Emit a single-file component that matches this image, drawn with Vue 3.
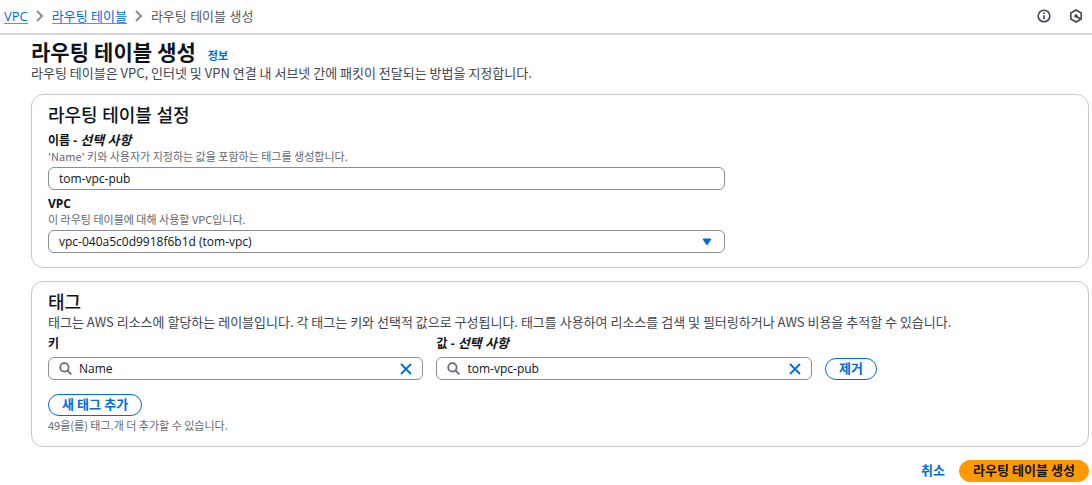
<script setup>
import { ref } from 'vue'

const name = ref('tom-vpc-pub')
const vpc = ref('vpc-040a5c0d9918f6b1d')
const tags = ref([{ key: 'Name', value: 'tom-vpc-pub' }])

const maxTags = 50

function addTag() {
  tags.value.push({ key: '', value: '' })
}

function removeTag(index) {
  tags.value.splice(index, 1)
}
</script>

<template>
  <div class="page">
    <header class="topbar">
      <nav class="breadcrumbs">
        <a href="#">VPC</a>
        <svg class="chevron" viewBox="0 0 8 12"><path d="M1 1l5 5-5 5" /></svg>
        <a href="#">라우팅 테이블</a>
        <svg class="chevron" viewBox="0 0 8 12"><path d="M1 1l5 5-5 5" /></svg>
        <span>라우팅 테이블 생성</span>
      </nav>
      <div class="tools">
        <button class="icon-btn" aria-label="정보">
          <svg viewBox="0 0 14 14">
            <circle cx="7" cy="7" r="5.8" />
            <path d="M7 6.2v4M7 3.6v1.4" />
          </svg>
        </button>
        <button class="icon-btn" aria-label="설정">
          <svg viewBox="0 0 14 14">
            <path d="M7 1l5.2 3v6L7 13l-5.2-3V4z" />
            <path d="M7.5 7.5l4 2.5" />
            <circle class="dot" cx="7" cy="7" r="1.8" />
          </svg>
        </button>
      </div>
    </header>

    <main class="content">
      <div class="title-row">
        <h1>라우팅 테이블 생성</h1>
        <a href="#" class="info">정보</a>
      </div>
      <p class="description">
        라우팅 테이블은 VPC, 인터넷 및 VPN 연결 내 서브넷 간에 패킷이 전달되는 방법을 지정합니다.
      </p>

      <section class="card settings">
        <h2>라우팅 테이블 설정</h2>
        <div class="fields">
          <div class="field">
            <label for="name">이름 - <em>선택 사항</em></label>
            <p class="hint">'Name' 키와 사용자가 지정하는 값을 포함하는 태그를 생성합니다.</p>
            <input id="name" v-model="name" class="control" type="text" />
          </div>
          <div class="field">
            <label for="vpc">VPC</label>
            <p class="hint">이 라우팅 테이블에 대해 사용할 VPC입니다.</p>
            <div class="select-wrap">
              <select id="vpc" v-model="vpc" class="control">
                <option value="vpc-040a5c0d9918f6b1d">vpc-040a5c0d9918f6b1d (tom-vpc)</option>
              </select>
              <svg class="caret" viewBox="0 0 10 8"><path d="M1 1h8L5 7z" /></svg>
            </div>
          </div>
        </div>
      </section>

      <section class="card">
        <h2>태그</h2>
        <p class="description">
          태그는 AWS 리소스에 할당하는 레이블입니다. 각 태그는 키와 선택적 값으로 구성됩니다. 태그를 사용하여 리소스를 검색 및 필터링하거나 AWS 비용을 추적할 수 있습니다.
        </p>
        <div v-for="(tag, i) in tags" :key="i" class="tag-row">
          <div class="tag-field">
            <label :for="`key-${i}`">키</label>
            <div class="search control">
              <svg class="magnifier" viewBox="0 0 14 14">
                <circle cx="5.8" cy="5.8" r="4.5" />
                <path d="M9 9l4.2 4.2" />
              </svg>
              <input :id="`key-${i}`" v-model="tag.key" type="text" />
              <button class="clear" aria-label="지우기" @click="tag.key = ''">
                <svg viewBox="0 0 12 12"><path d="M1 1l10 10M11 1L1 11" /></svg>
              </button>
            </div>
          </div>
          <div class="tag-field">
            <label :for="`value-${i}`">값 - <em>선택 사항</em></label>
            <div class="search control">
              <svg class="magnifier" viewBox="0 0 14 14">
                <circle cx="5.8" cy="5.8" r="4.5" />
                <path d="M9 9l4.2 4.2" />
              </svg>
              <input :id="`value-${i}`" v-model="tag.value" type="text" />
              <button class="clear" aria-label="지우기" @click="tag.value = ''">
                <svg viewBox="0 0 12 12"><path d="M1 1l10 10M11 1L1 11" /></svg>
              </button>
            </div>
          </div>
          <div class="tag-action">
            <button class="btn" @click="removeTag(i)">제거</button>
          </div>
        </div>
        <button class="btn add" @click="addTag">새 태그 추가</button>
        <p class="hint">{{ maxTags - tags.length }}을(를) 태그.개 더 추가할 수 있습니다.</p>
      </section>

      <footer class="actions">
        <button class="btn link">취소</button>
        <button class="btn primary">라우팅 테이블 생성</button>
      </footer>
    </main>
  </div>
</template>

<style>
body {
  background: #fff;
}
</style>

<style scoped>
.page {
  font-family: 'Open Sans', 'Noto Sans CJK KR', sans-serif;
  font-size: 13px;
  line-height: 16px;
  color: #0f141a;
}

h1,
h2,
p {
  margin: 0;
}

h1,
h2,
.info,
.btn {
  font-family: Lato, 'Noto Sans CJK KR', sans-serif;
}

button,
input,
select {
  font: inherit;
  color: inherit;
}

button {
  cursor: pointer;
}

svg {
  display: block;
  fill: none;
  flex: none;
}

.topbar {
  display: flex;
  align-items: center;
  justify-content: space-between;
  padding: 8px 9px 9px 4px;
  border-bottom: 2px solid #d5d5da;
}

.breadcrumbs {
  display: flex;
  align-items: center;
  gap: 8px;
  color: #565a63;
}

.breadcrumbs a {
  height: 15px;
  color: #006ce0;
  text-decoration: none;
  border-bottom: 1px solid #4a97ea;
}

.chevron {
  width: 8px;
  height: 12px;
  stroke: #8c8c94;
  stroke-width: 2;
}

.tools {
  display: flex;
  gap: 18px;
}

.icon-btn {
  border: none;
  padding: 0;
  background: transparent;
}

.icon-btn svg {
  width: 14px;
  height: 14px;
  stroke: #424650;
  stroke-width: 1.6;
}

.icon-btn .dot {
  fill: #424650;
  stroke: none;
}

.content {
  padding: 4px 3px 3px 31px;
}

.title-row {
  display: flex;
  align-items: baseline;
  gap: 12px;
}

h1 {
  font-size: 21px;
  line-height: 26px;
  font-weight: 700;
}

.info {
  font-size: 11px;
  line-height: 14px;
  font-weight: 700;
  color: #006ce0;
  text-decoration: none;
}

.description {
  color: #424650;
  font-family: 'Noto Sans CJK KR', sans-serif;
}

.card {
  margin-top: 13px;
  padding: 8px 16px 14px;
  border: 1px solid #c6c6cd;
  border-radius: 12px;
}

h2 {
  font-size: 18px;
  line-height: 24px;
  font-weight: 500;
}

.settings {
  display: grid;
  grid-template-columns: 2fr 1fr;
  gap: 6px 8px;
}

.settings h2 {
  grid-column: 1 / -1;
}

.fields {
  display: flex;
  flex-direction: column;
  gap: 6px;
}

.field {
  display: flex;
  flex-direction: column;
}

label {
  font-size: 12px;
  font-weight: 700;
}

label em {
  font-size: 13px;
  line-height: 14px;
}

.hint {
  font-family: 'Noto Sans CJK KR', sans-serif;
  font-size: 11px;
  line-height: 14px;
  color: #656871;
}

.control {
  width: 100%;
  height: 23px;
  padding: 0 10px;
  border: 1px solid #8c8c94;
  border-radius: 6px;
  background: #fff;
  box-sizing: border-box;
  font-size: 12px;
}

.field .control {
  display: block;
}

.field .hint {
  margin-bottom: 4px;
}

.select-wrap {
  position: relative;
}

select.control {
  appearance: none;
}

.caret {
  position: absolute;
  right: 13px;
  top: 8px;
  width: 10px;
  height: 8px;
  fill: #006ce0;
  stroke: #006ce0;
  pointer-events: none;
}

.tag-row {
  display: grid;
  grid-template-columns: 38fr 38fr 25fr;
  gap: 13px;
  margin-top: 6px;
}

.tag-field {
  display: flex;
  flex-direction: column;
  gap: 5px;
}

.search {
  display: flex;
  align-items: center;
  gap: 7px;
}

.search input {
  flex: 1;
  min-width: 0;
  padding: 0;
  border: none;
  outline: none;
  background: transparent;
}

.magnifier {
  width: 13px;
  height: 13px;
  stroke: #656871;
  stroke-width: 1.9;
}

.clear {
  padding: 0;
  border: none;
  background: transparent;
}

.clear svg {
  width: 12px;
  height: 12px;
  stroke: #006ce0;
  stroke-width: 1.8;
}

.tag-action {
  align-self: end;
}

.btn {
  display: block;
  height: 22px;
  padding: 0 13px 2px;
  border: 1px solid #006ce0;
  border-radius: 11px;
  background: #fff;
  color: #006ce0;
  font-size: 13px;
  font-weight: 700;
  line-height: 16px;
}

.add {
  margin: 14px 0 2px;
}

.actions {
  display: flex;
  justify-content: flex-end;
  margin-top: 13px;
}

.link {
  border-color: transparent;
}

.primary {
  border-color: #ff9900;
  background: #ff9900;
  color: #0f141a;
}
</style>
